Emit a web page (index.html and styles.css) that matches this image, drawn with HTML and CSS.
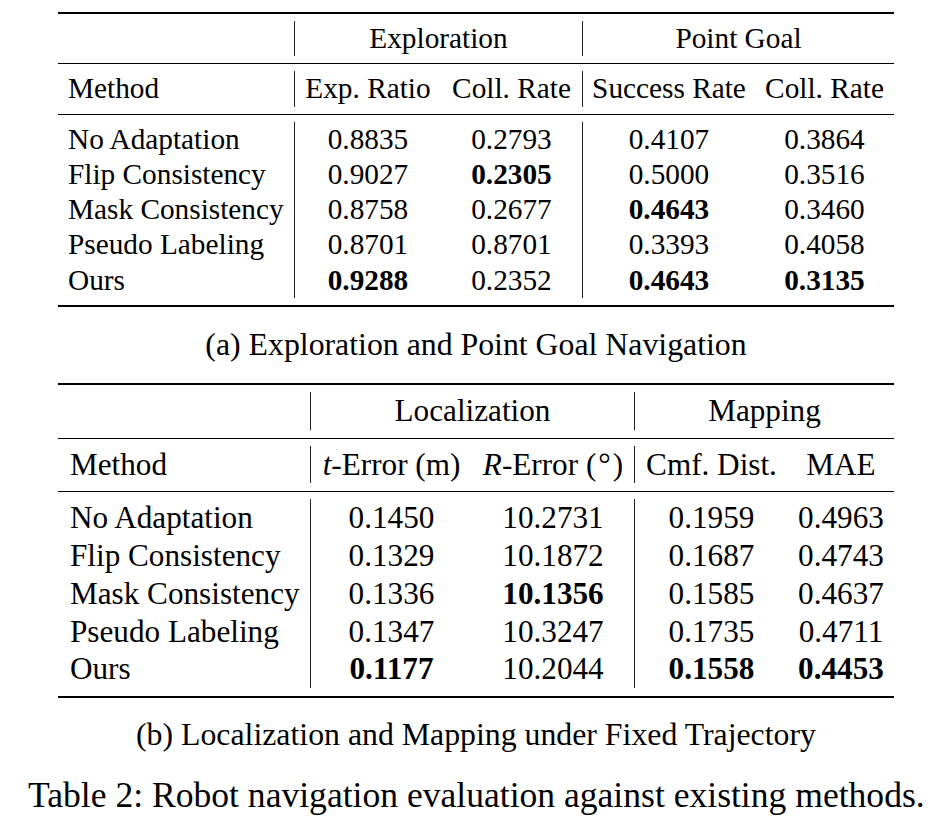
FILE: index.html
```html
<!DOCTYPE html>
<html>
<head>
<meta charset="utf-8">
<link rel="stylesheet" href="styles.css">
</head>
<body>
<div class="figure">
  <div class="tbl tbl-a">
    <div class="sec">
      <div class="c first"></div>
      <div class="c sep span2">Exploration</div>
      <div class="c sep span2">Point Goal</div>
    </div>
    <div class="sec">
      <div class="c first">Method</div>
      <div class="c sep">Exp. Ratio</div>
      <div class="c">Coll. Rate</div>
      <div class="c sep">Success Rate</div>
      <div class="c">Coll. Rate</div>
    </div>
    <div class="sec body">
      <div class="c first">No Adaptation</div><div class="c sep">0.8835</div><div class="c">0.2793</div><div class="c sep">0.4107</div><div class="c">0.3864</div>
      <div class="c first">Flip Consistency</div><div class="c sep">0.9027</div><div class="c best">0.2305</div><div class="c sep">0.5000</div><div class="c">0.3516</div>
      <div class="c first">Mask Consistency</div><div class="c sep">0.8758</div><div class="c">0.2677</div><div class="c sep best">0.4643</div><div class="c">0.3460</div>
      <div class="c first">Pseudo Labeling</div><div class="c sep">0.8701</div><div class="c">0.8701</div><div class="c sep">0.3393</div><div class="c">0.4058</div>
      <div class="c first">Ours</div><div class="c sep best">0.9288</div><div class="c">0.2352</div><div class="c sep best">0.4643</div><div class="c best">0.3135</div>
    </div>
  </div>
  <div class="subcap cap-a">(a) Exploration and Point Goal Navigation</div>

  <div class="tbl tbl-b">
    <div class="sec">
      <div class="c first"></div>
      <div class="c sep span2">Localization</div>
      <div class="c sep span2">Mapping</div>
    </div>
    <div class="sec">
      <div class="c first">Method</div>
      <div class="c sep"><i>t</i>-Error (m)</div>
      <div class="c"><i>R</i>-Error (<span class="deg">&#176;</span>)</div>
      <div class="c sep">Cmf. Dist.</div>
      <div class="c">MAE</div>
    </div>
    <div class="sec body">
      <div class="c first">No Adaptation</div><div class="c sep">0.1450</div><div class="c">10.2731</div><div class="c sep">0.1959</div><div class="c">0.4963</div>
      <div class="c first">Flip Consistency</div><div class="c sep">0.1329</div><div class="c">10.1872</div><div class="c sep">0.1687</div><div class="c">0.4743</div>
      <div class="c first">Mask Consistency</div><div class="c sep">0.1336</div><div class="c best">10.1356</div><div class="c sep">0.1585</div><div class="c">0.4637</div>
      <div class="c first">Pseudo Labeling</div><div class="c sep">0.1347</div><div class="c">10.3247</div><div class="c sep">0.1735</div><div class="c">0.4711</div>
      <div class="c first">Ours</div><div class="c sep best">0.1177</div><div class="c">10.2044</div><div class="c sep best">0.1558</div><div class="c best">0.4453</div>
    </div>
  </div>
  <div class="subcap cap-b">(b) Localization and Mapping under Fixed Trajectory</div>
  <div class="maincap">Table 2: Robot navigation evaluation against existing methods.</div>
</div>
</body>
</html>
```
FILE: styles.css
```css
html, body {
  margin: 0;
  padding: 0;
  background: #ffffff;
}
body {
  font-family: "Liberation Serif", "Times New Roman", serif;
  color: #000000;
}
.figure {
  width: 896px;
  margin-left: 28px;
  padding-top: 12px;
}
.tbl {
  margin: 0 30px;
  border-top: 2px solid #000;
  border-bottom: 2px solid #000;
}
.sec {
  display: grid;
  border-bottom: 1px solid #000;
}
.sec.body {
  border-bottom: none;
}
.tbl-a .sec {
  grid-template-columns: 236px 147px 141px 173px 139px;
  font-size: 29.3px;
  line-height: 35.25px;
  padding: 7px 0 7px 0;
}
.tbl-b .sec {
  grid-template-columns: 252px 162px 162px 154px 106px;
  font-size: 31.2px;
  line-height: 37.75px;
  padding: 7px 0 8px 0;
}
.c {
  text-align: center;
  white-space: nowrap;
}
.c.first {
  text-align: left;
  padding-left: 10px;
}
.tbl-b .c.first {
  padding-left: 12px;
}
.sep {
  border-left: 1px solid #222;
}
.span2 {
  grid-column: span 2;
}
.best {
  font-weight: bold;
}
.deg {
  padding: 0 2px;
}
.subcap {
  text-align: center;
  white-space: nowrap;
  font-size: 31.8px;
  line-height: 38px;
}
.cap-a {
  margin: 19px 0 19px 0;
}
.cap-b {
  margin-top: 18px;
}
.maincap {
  text-align: center;
  white-space: nowrap;
  font-size: 35.6px;
  line-height: 42px;
  margin-top: 20px;
}
```
